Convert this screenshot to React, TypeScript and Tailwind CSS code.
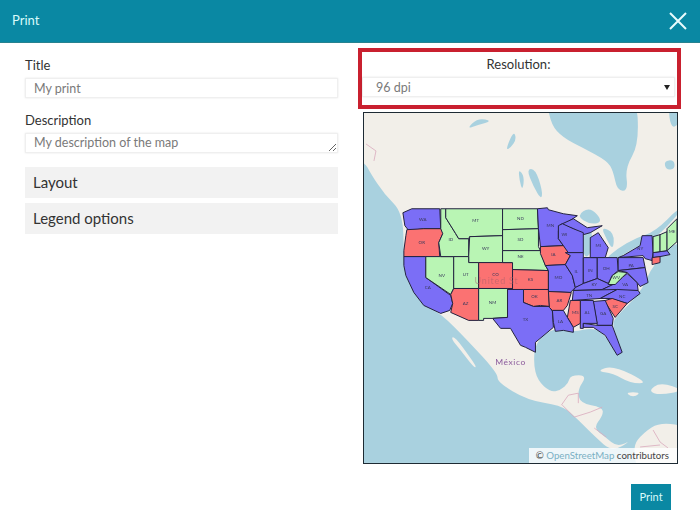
const ox = 363;
const oy = 112;
const shift = (p: number[][]) => p.map(([x, y]) => `${x - ox},${y - oy}`).join(" ");

// Rounds a coast outline: each vertex becomes the control point of a curve between edge midpoints.
const smooth = (p: number[][]) => {
  const q = p.map(([x, y]) => [x - ox, y - oy]);
  const mid = (a: number[], b: number[]) => [(a[0] + b[0]) / 2, (a[1] + b[1]) / 2];
  const start = mid(q[q.length - 1], q[0]);
  let d = `M${start[0]} ${start[1]}`;
  q.forEach((pt, i) => {
    const m = mid(pt, q[(i + 1) % q.length]);
    d += ` Q${pt[0]} ${pt[1]} ${m[0]} ${m[1]}`;
  });
  return d + " Z";
};

const BLUE = "#7b6ef6";
const RED = "#fb7272";
const GREEN = "#b9f5b4";

const states: { f: string; l: string; at?: number[]; p: number[][] }[] = [
  { f: BLUE, l: "WA", at: [422, 219], p: [[411,208],[439,208],[440,228],[423,228],[408,230],[404,225],[402,212]] },
  { f: RED, l: "OR", at: [421, 242], p: [[406,229],[423,228],[441,228],[442,233],[438,242],[439,256],[403,256],[403,250],[405,235]] },
  { f: BLUE, l: "CA", at: [427, 287], p: [[403,256],[425,256],[425,277],[450,295],[452,303],[449,310],[440,313],[423,305],[413,292],[405,275],[403,265]] },
  { f: GREEN, l: "NV", at: [441, 275], p: [[425,256],[453,256],[453,288],[450,294],[425,277]] },
  { f: GREEN, l: "ID", at: [450, 239], p: [[440,208],[445,208],[445,217],[455,233],[458,238],[468,238],[468,256],[440,256],[438,242],[442,233],[440,228]] },
  { f: GREEN, l: "MT", at: [475, 220], p: [[445,208],[502,208],[502,235],[469,236],[468,238],[458,238],[455,233],[445,217]] },
  { f: GREEN, l: "WY", at: [485, 248], p: [[469,236],[502,235],[502,262],[478,262],[468,262],[468,256],[469,236]] },
  { f: GREEN, l: "UT", at: [465, 274], p: [[453,256],[468,256],[468,262],[478,262],[478,288],[453,288]] },
  { f: RED, l: "CO", at: [495, 274], p: [[478,262],[512,262],[512,288],[478,288]] },
  { f: RED, l: "AZ", at: [465, 303], p: [[453,288],[478,288],[478,320],[468,320],[450,312],[452,303],[450,294]] },
  { f: GREEN, l: "NM", at: [492, 302], p: [[478,288],[507,288],[507,317],[492,318],[483,318],[483,320],[478,320]] },
  { f: GREEN, l: "ND", at: [520, 218], p: [[502,208],[537,208],[538,228],[502,229]] },
  { f: GREEN, l: "SD", at: [520, 239], p: [[502,229],[538,228],[538,246],[540,250],[502,250]] },
  { f: GREEN, l: "NE", at: [520, 256], p: [[502,250],[540,250],[545,265],[548,270],[512,269],[512,262],[502,262]] },
  { f: RED, l: "KS", at: [530, 279], p: [[512,269],[548,270],[548,289],[512,289]] },
  { f: RED, l: "OK", at: [534, 296], p: [[523,289],[548,289],[549,306],[540,305],[533,306],[523,302]] },
  { f: BLUE, l: "TX", at: [525, 319], p: [[507,289],[523,289],[523,302],[533,306],[549,306],[552,311],[553,327],[535,342],[535,352],[525,347],[520,345],[510,328],[500,328],[492,318],[507,317]] },
  { f: BLUE, l: "MN", at: [550, 225], p: [[537,208],[547,207],[548,209],[563,213],[577,215],[562,225],[558,230],[558,238],[563,245],[540,246],[538,228]] },
  { f: BLUE, l: "", p: [[560,224],[573,218],[587,227],[602,225],[590,232],[583,234],[573,228]] },
  { f: BLUE, l: "WI", at: [564, 234], p: [[558,225],[562,223],[573,228],[583,232],[583,252],[565,252],[563,245],[558,238]] },
  { f: RED, l: "IA", at: [553, 254], p: [[540,246],[563,245],[570,255],[565,264],[545,265],[540,253]] },
  { f: BLUE, l: "MO", at: [558, 277], p: [[545,265],[565,264],[572,275],[575,287],[570,292],[548,291],[548,270]] },
  { f: BLUE, l: "IL", at: [576, 271], p: [[565,252],[583,252],[583,257],[583,283],[580,285],[575,287],[572,275],[565,264],[570,255]] },
  { f: BLUE, l: "IN", at: [590, 270], p: [[583,257],[597,257],[597,278],[583,283]] },
  { f: BLUE, l: "MI", at: [598, 245], p: [[590,237],[598,232],[608,247],[605,257],[590,257]] },
  { f: BLUE, l: "OH", at: [606, 268], p: [[597,257],[605,257],[617,257],[618,270],[612,275],[608,283],[597,278]] },
  { f: BLUE, l: "KY", at: [594, 284], p: [[575,287],[583,283],[597,278],[608,283],[613,284],[602,289],[573,290]] },
  { f: BLUE, l: "VA", at: [625, 284], p: [[602,289],[615,283],[622,277],[627,273],[637,282],[638,290],[602,290]] },
  { f: BLUE, l: "TN", at: [589, 295], p: [[573,290],[617,289],[600,298],[572,300]] },
  { f: BLUE, l: "NC", at: [622, 296], p: [[617,289],[638,290],[640,293],[627,303],[610,298],[600,298]] },
  { f: RED, l: "SC", at: [615, 306], p: [[605,300],[612,298],[627,303],[615,317],[605,302]] },
  { f: BLUE, l: "GA", at: [603, 313], p: [[593,301],[605,300],[613,318],[612,325],[597,325]] },
  { f: BLUE, l: "AL", at: [587, 312], p: [[580,300],[593,300],[597,323],[583,323],[583,328],[580,328]] },
  { f: RED, l: "MS", at: [575, 312], p: [[570,300],[580,300],[580,323],[573,327],[567,317]] },
  { f: RED, l: "AR", at: [559, 300], p: [[548,291],[571,292],[567,305],[563,310],[552,310],[549,307]] },
  { f: BLUE, l: "LA", at: [560, 321], p: [[552,310],[563,310],[567,317],[573,327],[573,332],[563,330],[555,331],[553,322]] },
  { f: BLUE, l: "", p: [[583,323],[597,325],[612,325],[622,352],[617,355],[605,335],[593,327],[583,327]] },
  { f: BLUE, l: "PA", at: [631, 265], p: [[618,257],[643,257],[645,267],[618,270]] },
  { f: BLUE, l: "NY", at: [640, 248], p: [[623,255],[640,245],[642,235],[652,235],[653,252],[652,260],[645,258],[643,255],[618,257]] },
  { f: BLUE, l: "", p: [[618,270],[645,267],[648,282],[640,286],[637,282],[627,272]] },
  { f: BLUE, l: "", p: [[653,252],[667,250],[670,254],[660,256],[653,257]] },
  { f: RED, l: "", p: [[652,257],[660,256],[660,262],[652,264]] },
  { f: GREEN, l: "", p: [[653,236],[660,234],[660,251],[653,252]] },
  { f: GREEN, l: "", p: [[660,234],[667,231],[667,250],[660,251]] },
  { f: GREEN, l: "ME", at: [672, 231], p: [[667,228],[677,218],[677,241],[667,250]] },
  { f: GREEN, l: "WV", at: [616, 277], p: [[608,284],[612,275],[618,271],[627,272],[622,277],[615,284]] },
];

const land = [
  [[330,90],[710,90],[710,240],[677,242],[665,250],[650,270],[640,293],[615,317],[612,325],[622,352],[617,355],[605,335],[593,327],[573,332],[553,327],[535,342],[533,363],[537,380],[550,392],[560,390],[568,383],[570,375],[587,375],[577,390],[580,403],[602,407],[603,415],[593,428],[605,437],[617,447],[632,440],[612,452],[595,437],[573,415],[560,405],[527,400],[497,382],[497,373],[467,340],[440,313],[423,305],[413,292],[405,275],[403,256],[402,212],[383,193],[370,173],[363,160],[330,150]],
  [[450,338],[454,336],[470,358],[476,367],[473,367],[460,350]],
  [[632,447],[643,433],[660,422],[690,427],[690,480],[640,480]],
  [[596,371],[613,365],[649,383],[630,383],[613,373]],
  [[648,391],[660,382],[685,390],[660,395]],
  [[626,392],[640,392],[636,396],[630,396]],
];

const lakes = [
  [[545,90],[550,123],[563,137],[583,147],[607,160],[613,170],[617,190],[628,190],[625,167],[639,143],[636,90]],
  [[466,128],[477,117],[492,120],[477,124]],
  [[505,149],[513,130],[516,138],[510,147]],
  [[668,105],[680,105],[680,122],[671,128]],
  [[518,168],[524,176],[522,190],[519,180]],
  [[526,168],[535,168],[542,190],[541,199],[533,186]],
  [[664,160],[674,159],[675,168],[666,169]],
  [[576,215],[590,206],[603,221],[590,224]],
  [[583,234],[592,226],[591,252],[585,258],[582,246]],
  [[601,226],[614,232],[613,250],[606,238]],
  [[605,259],[617,248],[636,237],[655,231],[680,206],[680,212],[655,238],[640,244],[622,255],[612,260]],
];

const borders = [
  "M365 143 L375 150 L373 160",
  "M561 405 L568 395 L578 393 L578 403 M562 405 L574 417 L590 412 L602 407 M594 428 L606 437 M653 430 L660 442 L668 448 M640 447 L660 445",
];

function MapDrawing() {
  return (
    <svg viewBox="0 0 314 351" width="314" height="351" className="block h-full w-full blur-[0.4px]">
      <rect width="314" height="351" fill="#a9d1df" />
      {land.map((p, i) => (
        <path key={i} d={smooth(p)} fill="#f2efe9" />
      ))}
      {lakes.map((p, i) => (
        <path key={i} d={smooth(p)} fill="#a9d1df" />
      ))}
      {borders.map((d, i) => (
        <path key={i} d={d} transform={`translate(${-ox} ${-oy})`} fill="none" stroke="#d9a9bd" strokeWidth="0.8" />
      ))}
      {states.map((s, i) => (
        <polygon key={i} points={shift(s.p)} fill={s.f} stroke="#23223f" strokeWidth="1" strokeLinejoin="round" />
      ))}
      {states.map((s) =>
        s.at ? (
          <text key={s.l} x={s.at[0] - ox} y={s.at[1] - oy + 1.5} textAnchor="middle" fontSize="4.5" fill="#3a3a5c" fontFamily="Lato, sans-serif">
            {s.l}
          </text>
        ) : null,
      )}
      <text x={133} y={172} textAnchor="middle" fontSize="9" fill="#a8606a" opacity="0.55" letterSpacing="0.8" fontFamily="Lato, sans-serif">
        United St
      </text>
      <text x={147} y={253} textAnchor="middle" fontSize="8.5" fill="#8b5a9c" letterSpacing="0.6" fontFamily="Lato, sans-serif">
        México
      </text>
    </svg>
  );
}

const fieldClass =
  "block h-5 w-full rounded-none border border-[#efefef] bg-white text-[12.5px] leading-[16px] text-[#7a7a7a] shadow-[0_0_2px_rgba(0,0,0,0.1)] outline-none";

export default function App() {
  return (
    <div className="flex h-[523px] w-[700px] flex-col overflow-hidden bg-white text-[#333] [font-family:Lato,'Open_Sans',sans-serif]">
      <header className="flex h-[43px] shrink-0 items-center justify-between border-b border-[#27828f] bg-[#0a88a3] pl-3 pr-[12px]">
        <span className="text-[13px] text-[#d9fbfb]">Print</span>
        <svg width="20" height="20" viewBox="0 0 20 20" className="text-[#e9fbfd]">
          <path d="M2 2 L18 18 M18 2 L2 18" stroke="currentColor" strokeWidth="2" fill="none" />
        </svg>
      </header>

      <main className="flex pl-[25px] pt-[5px]">
        <section className="w-[313px] pt-[9px]">
          <label className="block text-[13px] leading-[16px]">Title</label>
          <input readOnly value="My print" className={`${fieldClass} mt-[5px] px-2`} />
          <label className="mt-[14px] block text-[13px] leading-[16px]">Description</label>
          <textarea
            readOnly
            value="My description of the map"
            className={`${fieldClass} mt-[5px] resize-y overflow-hidden px-2 pt-[1px]`}
          />
          <div className="mt-[14px] flex h-[31px] items-center bg-[#f2f2f2] px-2 text-[15px]">Layout</div>
          <div className="mt-[5px] flex h-[31px] items-center bg-[#f2f2f2] px-2 text-[15px]">Legend options</div>
        </section>

        <section className="ml-[20px] w-[323px]">
          <div className="h-[61px] border-[4px] border-[#c9202f] pt-[4px]">
            <div className="pr-[2px] text-center text-[13px] leading-[16px]">Resolution:</div>
            <div className="relative mt-[5px] mr-[2px]">
              <select className={`${fieldClass} appearance-none pl-[13px] pt-[2px]`} defaultValue="96">
                <option value="96">96 dpi</option>
              </select>
              <svg width="6" height="5" viewBox="0 0 6 5" className="absolute right-[5px] top-[8px]">
                <path d="M0 0 H6 L3 5 Z" fill="#222" />
              </svg>
            </div>
          </div>
          <div className="relative ml-[5px] mt-[3px] h-[352px] w-[315px] overflow-hidden border border-[#1d2a33]">
            <MapDrawing />
            <div className="absolute bottom-0 right-0 bg-white/80 pl-[7px] pr-[8px] text-[9.7px] leading-[15px] text-[#444]">
              © <span className="text-[#7ab0c4]">OpenStreetMap</span> contributors
            </div>
          </div>
          <div className="mt-[20px] flex justify-end pr-[10px]">
            <button className="h-[26px] w-10 bg-[#0a88a3] text-[11px] text-[#d9fbfb]">Print</button>
          </div>
        </section>
      </main>
    </div>
  );
}
